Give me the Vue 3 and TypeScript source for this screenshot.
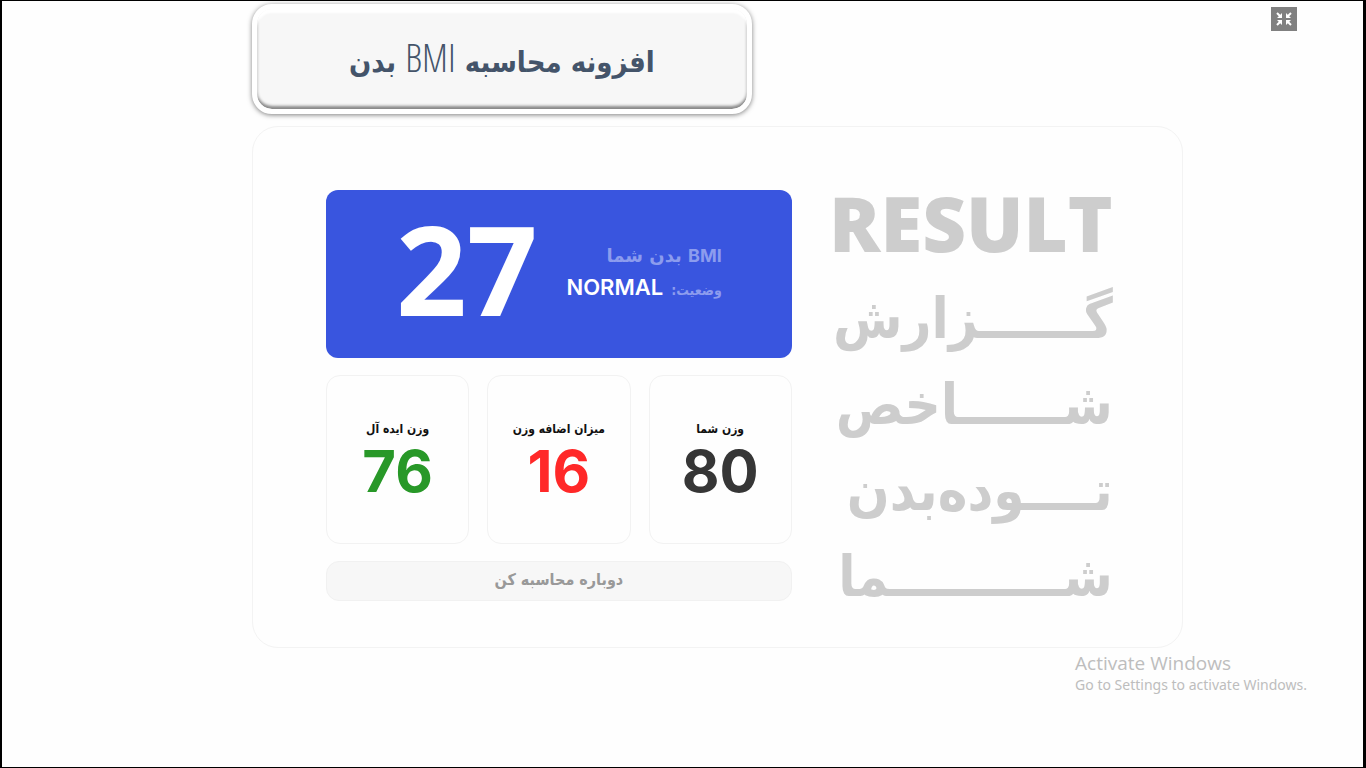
<script setup lang="ts">
interface Stat {
  label: string
  value: number
  tone: string
}

const stats: Stat[] = [
  { label: 'وزن شما', value: 80, tone: 'dark' },
  { label: 'میزان اضافه وزن', value: 16, tone: 'red' },
  { label: 'وزن ایده آل', value: 76, tone: 'green' },
]

const headingLines: string[] = ['گــــــزارش', 'شــــــاخص', 'تــــوده‌بدن', 'شــــــــــما']
</script>

<template>
  <div class="page">
    <button class="shrink" type="button" aria-label="Exit full screen">
      <svg viewBox="0 0 16 16" width="16" height="16" aria-hidden="true">
        <path fill="none" stroke="#fff" stroke-width="2" d="M1 2l4 4M15 2l-4 4M1 14l4-4M15 14l-4-4" />
        <path fill="#fff" d="M6 2v5H1zM10 2v5h5zM6 14V9H1zM10 14V9h5z" />
      </svg>
    </button>

    <main class="content">
      <header class="banner">
        <h1 dir="rtl">افزونه محاسبه <span class="latin">BMI</span> بدن</h1>
      </header>

      <section class="card" dir="rtl">
        <h2 class="heading">
          <span class="result">RESULT</span>
          <span v-for="line in headingLines" :key="line" class="line">{{ line }}</span>
        </h2>

        <div class="report">
          <div class="summary">
            <div class="status">
              <p class="caption"><span class="bmi">BMI</span> بدن شما</p>
              <p class="state"><span>وضعیت:</span><strong>NORMAL</strong></p>
            </div>
            <div class="score">27</div>
          </div>

          <div class="stats">
            <div v-for="stat in stats" :key="stat.label" class="stat">
              <span class="label">{{ stat.label }}</span>
              <span class="value" :class="stat.tone">{{ stat.value }}</span>
            </div>
          </div>

          <button class="again" type="button">دوباره محاسبه کن</button>
        </div>
      </section>
    </main>

    <aside class="notice">
      <p class="notice-title">Activate Windows</p>
      <p class="notice-text">Go to Settings to activate Windows.</p>
    </aside>
  </div>
</template>

<style>
body {
  margin: 0;
  background: #fefefe;
}
</style>

<style scoped>
.page {
  position: relative;
  box-sizing: border-box;
  min-height: 100vh;
  padding: 3px 13.2% 0 18.3%;
  border: solid #000;
  border-width: 1px 3px 1px 2px;
  background: #fefefe;
  font-family: "DejaVu Sans Condensed", "DejaVu Sans", sans-serif;
}

.shrink {
  position: absolute;
  top: 6px;
  right: 66px;
  display: flex;
  align-items: center;
  justify-content: center;
  width: 26px;
  height: 24px;
  padding: 0;
  border: 0;
  background: #808080;
}

.content {
  display: flex;
  flex-direction: column;
  gap: 12px;
}

.banner {
  box-sizing: border-box;
  display: flex;
  align-items: center;
  justify-content: center;
  width: 53.7%;
  height: 110px;
  border: 5px solid #fff;
  border-radius: 20px;
  background: #f7f7f7;
  box-shadow: 0 1px 5px rgba(0, 0, 0, 0.5), inset 0 4px 2px #fff, inset 0 -3px 3px rgba(0, 0, 0, 0.45);
}

h1 {
  margin: 0;
  color: #44546a;
  font-size: 29px;
  line-height: 44px;
  font-weight: 700;
  white-space: nowrap;
}

.latin {
  font-family: "Open Sans Condensed Light", "Open Sans Condensed", "Roboto Condensed", "Liberation Sans Narrow", sans-serif;
  font-size: 38px;
  font-weight: 300;
}

.card {
  box-sizing: border-box;
  display: grid;
  grid-template-columns: minmax(0, 277fr) minmax(0, 466fr);
  align-items: start;
  gap: 44px;
  min-height: 522px;
  padding: 63px 69px 20px 73px;
  border: 1px solid #f3f3f3;
  border-radius: 26px;
}

.heading {
  display: flex;
  flex-direction: column;
  margin: 0;
  color: #cdcdcd;
  font-size: 56px;
  line-height: 86px;
  white-space: nowrap;
}

.result {
  margin-bottom: 20px;
  font-family: "Open Sans", sans-serif;
  font-size: 76px;
  line-height: 66px;
  font-weight: 800;
}

.report {
  display: flex;
  flex-direction: column;
  gap: 17px;
}

.summary {
  box-sizing: border-box;
  display: flex;
  align-items: center;
  justify-content: space-between;
  height: 168px;
  padding: 0 70px;
  border-radius: 12px;
  background: #3955df;
  color: #fff;
}

.status {
  padding-bottom: 4px;
  white-space: nowrap;
}

.status p {
  margin: 0;
  color: #8c9cee;
  font-weight: 700;
}

.caption {
  font-family: "DejaVu Sans", sans-serif;
  font-size: 18px;
  line-height: 32px;
}

.bmi,
.state strong {
  font-family: Inter, sans-serif;
}

.status .state {
  display: flex;
  align-items: baseline;
  gap: 8px;
  font-size: 14px;
  line-height: 30px;
}

.state strong {
  color: #fff;
  font-size: 22px;
  font-weight: 600;
}

.score {
  padding-bottom: 12px;
  font-family: "Open Sans", sans-serif;
  font-size: 124px;
  line-height: 156px;
  font-weight: 700;
}

.stats {
  display: grid;
  grid-template-columns: repeat(3, 1fr);
  gap: 18px;
}

.stat {
  box-sizing: border-box;
  display: flex;
  flex-direction: column;
  align-items: center;
  height: 169px;
  padding-top: 40px;
  border: 1px solid #f2f2f2;
  border-radius: 14px;
}

.label {
  color: #111;
  font-size: 12px;
  line-height: 26px;
  font-weight: 700;
  white-space: nowrap;
}

.value {
  font-family: Inter, sans-serif;
  font-size: 58px;
  line-height: 58px;
  font-weight: 700;
}

.dark {
  color: #363636;
}

.red {
  color: #ff2828;
}

.green {
  color: #289828;
}

.again {
  height: 40px;
  padding: 0 0 4px;
  border: 1px solid #f1f1f1;
  border-radius: 13px;
  background: #f7f7f7;
  color: #999;
  font-family: "DejaVu Sans Condensed", "DejaVu Sans", sans-serif;
  font-size: 16px;
  font-weight: 700;
}

.notice {
  position: absolute;
  right: 56px;
  bottom: 72px;
  color: #bdbdbd;
  white-space: nowrap;
}

.notice p {
  margin: 0;
}

.notice-title {
  font-family: "Open Sans", sans-serif;
  font-size: 19px;
  line-height: 24px;
}

.notice-text {
  font-family: "Noto Sans", sans-serif;
  font-size: 14px;
  line-height: 20px;
}
</style>
